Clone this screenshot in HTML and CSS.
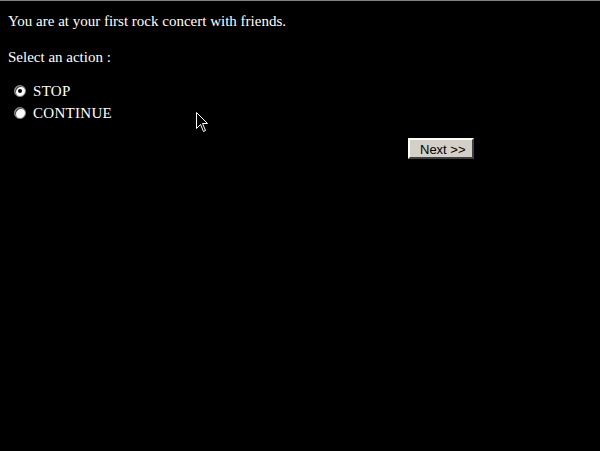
FILE: index.html
```html
<!DOCTYPE html>
<html>
<head>
<meta charset="utf-8">
<link rel="stylesheet" href="styles.css">
</head>
<body>
<div class="page">
  <p class="intro">You are at your first rock concert with friends.</p>
  <p class="prompt">Select an action :</p>
  <form class="choices">
    <label class="choice"><input type="radio" name="action" class="radio" checked> STOP</label>
    <label class="choice"><input type="radio" name="action" class="radio"> CONTINUE</label>
    <div class="actions"><button type="button" class="next">Next &gt;&gt;</button></div>
  </form>
</div>
<svg class="cursor" width="12" height="20" viewBox="0 0 12 20"><path d="M0.5 0.5 V16.5 L4.5 12.5 L7.5 19.5 L9.5 18.5 L6.5 11.5 H11.5 Z" fill="#000" stroke="#fff" stroke-width="1"/></svg>
</body>
</html>
```
FILE: styles.css
```css
html { background: #000; border-top: 1px solid #808080; }
body { margin: 0; padding: 8px; background: #000; color: #fff; font-family: "Liberation Serif", "Times New Roman", serif; font-size: 15px; position: relative; min-height: 434px; box-sizing: border-box; }
.page { width: 466px; }
p { margin: 0; line-height: 18px; }
.intro { margin-top: 3px; }
.prompt { margin-top: 18px; }
.choices { margin-top: 14px; display: flex; flex-direction: column; }
.choice { display: flex; align-items: center; height: 22px; padding-left: 6px; gap: 7px; letter-spacing: 0.3px; }
.radio { appearance: none; -webkit-appearance: none; margin: 0; width: 12px; height: 12px; border-radius: 50%; background: #fff; border: 1px solid #808080; box-sizing: border-box; position: relative; box-shadow: inset 1px 1px 0 #404040; }
.radio:checked::after { content: ""; position: absolute; left: 3px; top: 3px; width: 4px; height: 4px; border-radius: 50%; background: #000; }
.actions { display: flex; justify-content: flex-end; margin-top: 14px; }
.next { font-family: "Liberation Sans", Arial, sans-serif; font-size: 13px; background: #d4d0c8; color: #000; border: 2px solid; border-color: #fff #404040 #404040 #fff; padding: 1px 6px 0 10px; height: 21px; width: 66px; text-align: left; }
.cursor { position: absolute; left: 196px; top: 111px; }
```
